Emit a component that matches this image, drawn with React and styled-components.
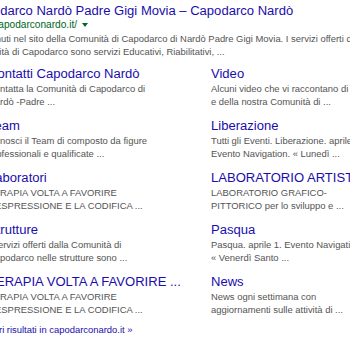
import styled, { createGlobalStyle } from "styled-components";

const sitelinks = [
  {
    title: "Contatti Capodarco Nardò",
    lines: ["Contatta la Comunità di Capodarco di", "Nardò -Padre ..."],
  },
  {
    title: "Video",
    lines: ["Alcuni video che vi raccontano di noi", "e della nostra Comunità di ..."],
  },
  {
    title: "Team",
    lines: ["Conosci il Team di composto da figure", "professionali e qualificate ..."],
  },
  {
    title: "Liberazione",
    lines: ["Tutti gli Eventi. Liberazione. aprile 25.", "Evento Navigation. « Lunedì ..."],
  },
  {
    title: "Laboratori",
    lines: ["TERAPIA VOLTA A FAVORIRE", "L'ESPRESSIONE E LA CODIFICA ..."],
  },
  {
    title: "LABORATORIO ARTISTICO",
    lines: ["LABORATORIO GRAFICO-", "PITTORICO per lo sviluppo e ..."],
  },
  {
    title: "Strutture",
    lines: ["I servizi offerti dalla Comunità di", "Capodarco nelle strutture sono ..."],
  },
  {
    title: "Pasqua",
    lines: ["Pasqua. aprile 1. Evento Navigation.", "« Venerdì Santo ..."],
  },
  {
    title: "TERAPIA VOLTA A FAVORIRE ...",
    lines: ["TERAPIA VOLTA A FAVORIRE", "L'ESPRESSIONE E LA CODIFICA ..."],
  },
  {
    title: "News",
    lines: ["News ogni settimana con", "aggiornamenti sulle attività di ..."],
  },
];

export default function App() {
  return (
    <>
      <GlobalStyle />
      <Result>
        <Title href="#">Capodarco Nardò Padre Gigi Movia – Capodarco Nardò</Title>
        <Cite>
          www.capodarconardo.it/
          <Arrow />
        </Cite>
        <Snippet>
          Benvenuti nel sito della Comunità di Capodarco di Nardò Padre Gigi Movia. I servizi offerti dalla
          <br />
          Comunità di Capodarco sono servizi Educativi, Riabilitativi, ...
        </Snippet>
        <Sitelinks>
          {sitelinks.map((item) => (
            <Sitelink key={item.title}>
              <SiteTitle href="#">{item.title}</SiteTitle>
              <Snippet>
                {item.lines[0]}
                <br />
                {item.lines[1]}
              </Snippet>
            </Sitelink>
          ))}
        </Sitelinks>
        <More href="#">Altri risultati in capodarconardo.it »</More>
      </Result>
    </>
  );
}

const GlobalStyle = createGlobalStyle`
  html, body {
    margin: 0;
    background: #fff;
    overflow: hidden;
  }
  body {
    font-family: "Liberation Sans", Arial, sans-serif;
  }
`;

const Result = styled.div`
  margin-left: -31px;
  padding-top: 3px;
`;

const Title = styled.a`
  display: block;
  font-size: 13.05px;
  line-height: 15px;
  color: #1a0dab;
  text-decoration: none;
  white-space: nowrap;
`;

const Cite = styled.div`
  font-size: 10.15px;
  line-height: 14px;
  color: #006621;
  white-space: nowrap;
`;

const Arrow = styled.span`
  display: inline-block;
  margin-left: 5px;
  vertical-align: 1px;
  border-top: 4px solid #006621;
  border-left: 3px solid transparent;
  border-right: 3px solid transparent;
`;

const Snippet = styled.div`
  font-size: 9.43px;
  line-height: 13px;
  color: #545454;
  white-space: nowrap;
`;

const Sitelinks = styled.div`
  display: grid;
  grid-template-columns: 223px 223px;
  row-gap: 10px;
  margin: 8px 0 0 19px;
`;

const Sitelink = styled.div`
  display: flex;
  flex-direction: column;
`;

const SiteTitle = styled(Title)`
  margin-bottom: 1px;
`;

const More = styled.a`
  display: block;
  margin: 7px 0 0 19px;
  font-size: 9.43px;
  line-height: 13px;
  color: #1a0dab;
  text-decoration: none;
  white-space: nowrap;
`;
